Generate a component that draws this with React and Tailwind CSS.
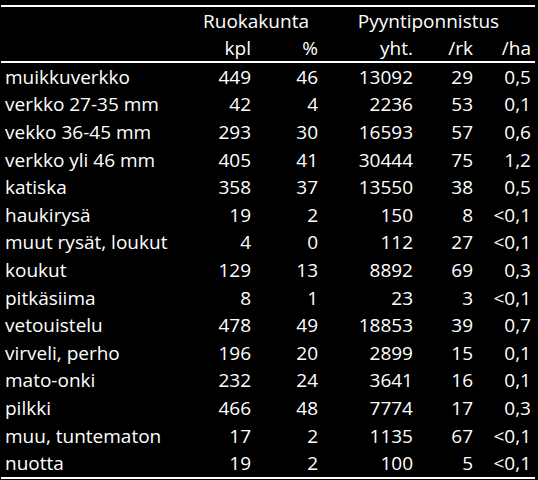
import React from "react";

const rows = [
  ["muikkuverkko", "449", "46", "13092", "29", "0,5"],
  ["verkko 27-35 mm", "42", "4", "2236", "53", "0,1"],
  ["vekko 36-45 mm", "293", "30", "16593", "57", "0,6"],
  ["verkko yli 46 mm", "405", "41", "30444", "75", "1,2"],
  ["katiska", "358", "37", "13550", "38", "0,5"],
  ["haukirysä", "19", "2", "150", "8", "<0,1"],
  ["muut rysät, loukut", "4", "0", "112", "27", "<0,1"],
  ["koukut", "129", "13", "8892", "69", "0,3"],
  ["pitkäsiima", "8", "1", "23", "3", "<0,1"],
  ["vetouistelu", "478", "49", "18853", "39", "0,7"],
  ["virveli, perho", "196", "20", "2899", "15", "0,1"],
  ["mato-onki", "232", "24", "3641", "16", "0,1"],
  ["pilkki", "466", "48", "7774", "17", "0,3"],
  ["muu, tuntematon", "17", "2", "1135", "67", "<0,1"],
  ["nuotta", "19", "2", "100", "5", "<0,1"],
];

const grid = "grid grid-cols-[189px_65px_67px_95px_60px_58px]";

export default function App() {
  return (
    <div
      className="min-h-screen w-full bg-black text-white text-[19px] leading-none"
      style={{ fontFamily: '"Open Sans", sans-serif' }}
    >
      <div className="pt-[5px] pl-[1px] w-[535px]">
        <div className="h-[2px] bg-white" />
        <div className={`${grid} h-[27px] items-center pt-[1px]`}>
          <div />
          <div className="col-span-2 text-center">Ruokakunta</div>
          <div className="col-span-3 text-center">Pyyntiponnistus</div>
        </div>
        <div className={`${grid} h-[27px] items-center pt-[1px]`}>
          <div />
          <div className="text-right pr-[4px]">kpl</div>
          <div className="text-right pr-[4px]">%</div>
          <div className="text-right pr-[4px]">yht.</div>
          <div className="text-right pr-[4px]">/rk</div>
          <div className="text-right pr-[4px]">/ha</div>
        </div>
        <div className="h-[2px] bg-white" />
        {rows.map((r) => (
          <div key={r[0]} className={`${grid} h-[27.6px] items-center pt-[1px]`}>
            <div className="pl-[4px] whitespace-nowrap">{r[0]}</div>
            {r.slice(1).map((v, i) => (
              <div key={i} className="text-right pr-[4px]">
                {v}
              </div>
            ))}
          </div>
        ))}
        <div className="h-[2px] bg-white" />
      </div>
    </div>
  );
}
